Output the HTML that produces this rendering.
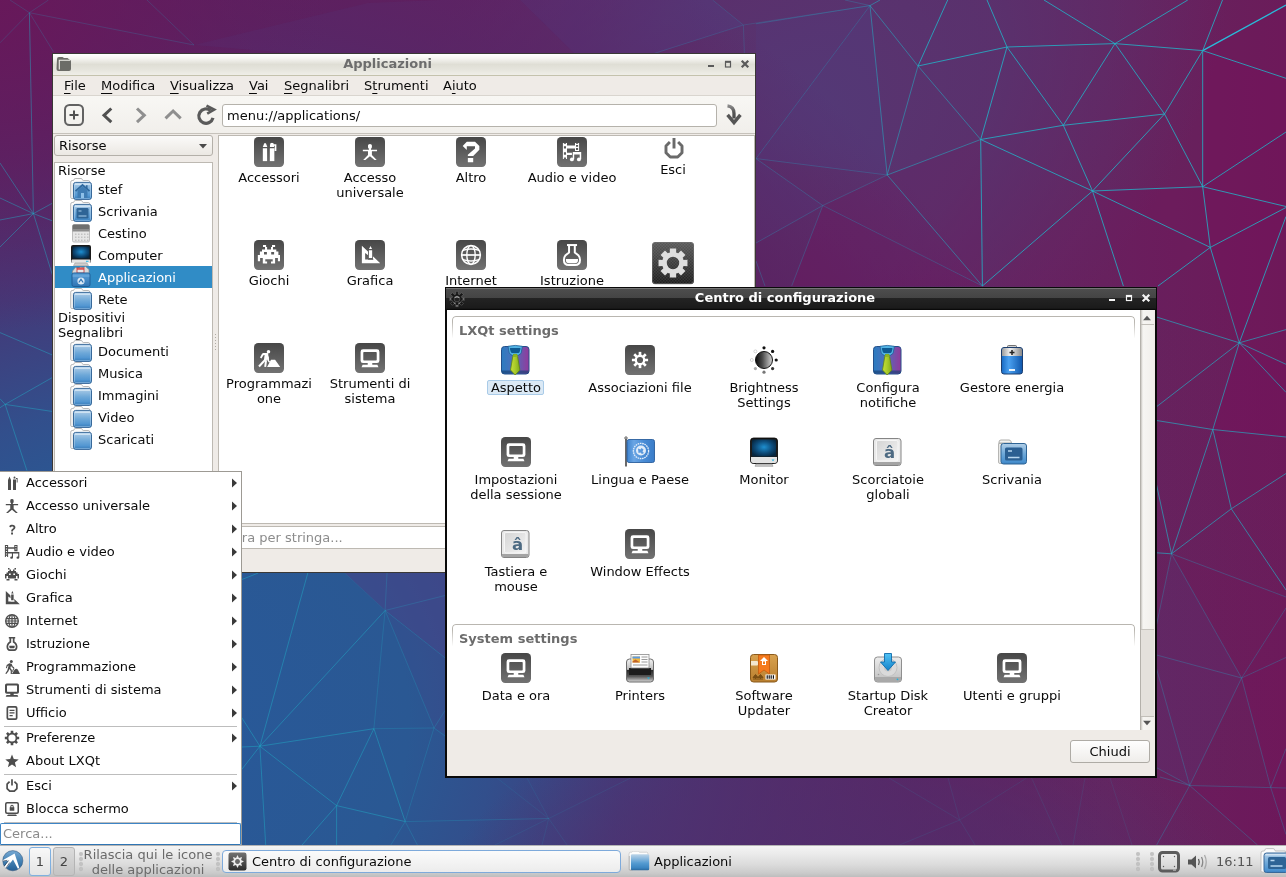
<!DOCTYPE html>
<html lang="it"><head><meta charset="utf-8"><title>LXQt Desktop</title>
<style>
html,body{margin:0;padding:0;}
body{width:1286px;height:877px;overflow:hidden;position:relative;font-family:"DejaVu Sans","Liberation Sans",sans-serif;font-size:13px;color:#0a0a0a;background:#5a2a6a;}
.abs{position:absolute;}

.t{position:absolute;white-space:nowrap;line-height:15px;}
.c{position:absolute;text-align:center;line-height:15px;}
u{text-decoration:underline;text-underline-offset:2.500px;text-decoration-thickness:1px;}

#fm,#cc,#menu,#panel{will-change:transform;transform:translateZ(0);}

</style></head><body>
<svg width="0" height="0" style="position:absolute">
<defs>
<linearGradient id="gbox" x1="0" y1="0" x2="0" y2="1"><stop offset="0" stop-color="#474747"/><stop offset="1" stop-color="#727272"/></linearGradient>
<symbol id="g-acc" viewBox="0 0 16 16"><path d="M4 15V5l1.500-3.500L7 5v10zM9 15V4.500h3V15zM9.600 3.600V2.200q0-.7.900-.7t.9.700v1.400zM12 3h1.600v4.500h-.9V3.900H12z"/></symbol>
<symbol id="g-acc2" viewBox="0 0 16 16"><path d="M2.800 15.700V4.800h3.600v10.900zM2.800 3.800l1.200-3.100h1.400l1.200 3.100zM8.700 15.700V4.800h3.800v10.900zM8.800 3.800V2.300q0-2 1.700-2t1.700 2v1.500zM12 1.500h2.200v5.700h-1.400V2.800H12z"/></symbol>
<symbol id="g-univ" viewBox="0 0 16 16"><path d="M6.250 2.400q0-1.400 1.700-1.400t1.700 1.400v1.300q0 1.200-.8 1.400v1h5.250v1.200H9.650v3.400L13.800 15h-1.900L7.950 11.700 4 15H2.100l4.150-4.300V7.300H1.800V6.100h5.250v-1q-.8-.2-.8-1.400z"/></symbol>
<symbol id="g-q" viewBox="0 0 16 16"><path d="M5.200 5.200C6 4.300 7 3.800 8.300 3.800c1.900 0 3.100 1 3.100 2.500 0 1.200-.7 1.800-1.500 2.400-.7.500-1 .8-1 1.500v.3H7.200v-.5c0-1 .5-1.600 1.300-2.200.7-.5 1-.8 1-1.400 0-.6-.5-1-1.300-1-.7 0-1.400.3-2 1zM7.100 11.600h1.900v1.900H7.100z"/></symbol>
<symbol id="g-q2" viewBox="0 0 16 16"><path d="M1.500 3.200C3.300 1.300 5.500.3 8.200.3c3.900 0 6.400 2 6.400 4.900 0 2.300-1.300 3.500-3.100 4.700-1.200.8-1.700 1.300-1.700 2.300v.3H5.600v-.8c0-1.900.9-2.900 2.500-3.900 1.300-.8 2-1.400 2-2.400 0-1.100-.9-1.700-2.400-1.700-1.400 0-2.700.6-4 1.900zM5.400 13.300h4.400v2.500H5.400z"/></symbol>
<symbol id="g-q3" viewBox="0 0 32 32"><path d="M7.700 10L11.800 5.850H20L24.350 10V13.650L18.200 20H12.850V18.800L20 12.400V10.150H11.800V14.050zM12.850 22.050H18.200V26.150H12.850z" fill="currentColor"/></symbol>
<symbol id="g-av2" viewBox="0 0 32 32"><path fill-rule="evenodd" d="M6.9 6.9H11V23.1H6.9zM7.9 6.9H10V7.7H7.9zM7.9 10.2H10V12.6H7.9zM7.9 16.3H10V18.8H7.9zM7.9 21.6H10V23.1H7.9zM19 6.9H23.1V15.1H19zM20 6.9H22.1V7.7H20zM20 9.1H22.1V10.8H20zM20 12H22.1V13.9H20zM11 9.55H19V12.4H11zM11 16.7H15.9V19H11z" fill="currentColor"/><path d="M16.76 15.9H25.2V18.4H16.76zM16.76 18.4H18.2V23.3H16.76zM23.7 18.4H25.2V23.3H23.7z" fill="currentColor"/><circle cx="15.900" cy="23.400" r="1.950" fill="currentColor"/><circle cx="22.900" cy="23.400" r="1.950" fill="currentColor"/></symbol>
<symbol id="g-av" viewBox="0 0 16 16"><path fill-rule="evenodd" d="M.9 1h3.200v2.300h6.200V1h3.200v6.200h-3.200V4.800H4.100v3.300H15.300v5.500a1.400 1.200 0 1 1-1.100-1.150V9.600H9v4a1.400 1.200 0 1 1-1.100-1.150V9.600H4.100v3.500H.9zM1.900 1.9h1.200v1.200h-1.200zM1.900 4.4h1.200v1.200h-1.200zM1.900 6.9h1.200v1.200h-1.200zM1.900 9.4h1.200v1.200h-1.200zM1.900 11.7h1.200v1.200h-1.200zM11.300 1.9h1.200v1.200h-1.200zM11.300 4.4h1.200v1.200h-1.200z"/></symbol>
<symbol id="g-game" viewBox="0 0 16 16"><path d="M4 1h1.500v1.500H7V4h2V2.500h1.500V1H12v1.500h-1.500V4H12v1.500h1.500V7H15v4.500h-1.500V9H12v3h1.500v1.500h-3V12H12v-.5H4v.5h1.500v1.500h-3V12H4V9H2.500v2.500H1V7h1.500V5.500H4V4h1.500V2.500H4zM5 6.500V8h1.700V6.500zM9.300 6.500V8H11V6.500z"/></symbol>
<symbol id="g-game2" viewBox="0 0 32 32"><path fill-rule="evenodd" d="M10 6H13.1V7.9H10zM12 7.9H14.1V10.4H12zM19 6H22.1V7.9H19zM18 7.9H20V10.4H18zM9 10.4H23.3V12.4H9zM6.9 12.4H25.4V16.1H6.9zM11 13.1H13.9V15.6H11zM18.2 13.1H21.1V15.6H18.2zM4.85 16.1H27V19H4.85zM4.85 19H7.1V22.3H4.85zM24.9 19H27V22.3H24.9zM9.8 19H22.1V22.4H9.8zM12.3 20.2H19.7V22.4H12.3zM9.8 22.4H14.1V24.6H9.8zM18 22.4H22.1V24.6H18z"/></symbol>
<symbol id="g-graf" viewBox="0 0 16 16"><mask id="mgraf"><rect width="16" height="16" fill="#fff"/><path d="M7.150 10.900V3.400l1.250-2.600 1.250 2.600v7.500z" fill="#000" stroke="#000" stroke-width="1.300"/></mask><path mask="url(#mgraf)" fill-rule="evenodd" d="M1.800 1V14.200H15.800zM4.300 6.500L10.900 11.500H4.300z"/><path d="M7.150 10.300V4.400h2.500v5.900zM7.250 3.500l1.150-2.400 1.150 2.400z"/></symbol>
<symbol id="g-net" viewBox="0 0 16 16"><path fill-rule="evenodd" d="M8 1a7 7 0 1 1 0 14A7 7 0 0 1 8 1zM7.400 2.500C6.600 3 6.100 3.900 5.800 5h1.600zM8.600 2.500V5h1.600C9.900 3.900 9.400 3 8.600 2.500zM5.500 3C4.600 3.400 3.800 4.100 3.300 5h1.300c.2-.8.500-1.400.9-2zM10.500 3c.4.600.7 1.200.9 2h1.300c-.5-.9-1.300-1.600-2.200-2zM2.800 6.200c-.2.400-.2.800-.3 1.200h1.800c0-.4.100-.8.100-1.200zM5.600 6.200c-.1.400-.1.800-.1 1.200h1.900V6.200zM8.600 6.200v1.200h1.900c0-.4 0-.8-.1-1.200zM11.600 6.200c0 .4.100.8.100 1.200h1.800c-.1-.4-.1-.8-.3-1.200zM2.500 8.600c.1.400.1.800.3 1.200h1.600c0-.4-.1-.8-.1-1.200zM5.500 8.600c0 .4 0 .8.100 1.200h1.800V8.600zM8.600 8.600v1.200h1.800c.1-.4.100-.8.100-1.200zM11.700 8.600c0 .4-.1.800-.1 1.200h1.600c.2-.4.200-.8.300-1.200zM3.300 11c.5.900 1.300 1.600 2.200 2-.4-.6-.7-1.200-.9-2zM5.800 11c.3 1.100.8 2 1.600 2.500V11zM8.600 11v2.500c.8-.5 1.300-1.400 1.600-2.500zM11.400 11c-.2.800-.5 1.400-.9 2 .9-.4 1.700-1.100 2.200-2z"/></symbol>
<symbol id="g-net2" viewBox="0 0 32 32"><g fill="none" stroke="currentColor"><circle cx="16" cy="16" r="9.400" stroke-width="1.500"/><ellipse cx="16" cy="16" rx="4.200" ry="9.400" stroke-width="1.400"/><path d="M6.600 16h18.800" stroke-width="1.700"/><path d="M8 11.300q8-2.600 16 0M8 20.700q8 2.600 16 0" stroke-width="1.400"/><path d="M10.800 8.300q5.200-1.300 10.400 0M10.800 23.700q5.200 1.300 10.400 0" stroke-width=".8" opacity=".45"/></g></symbol>
<symbol id="g-edu2" viewBox="0 0 32 32"><g fill="none" stroke="currentColor" stroke-width="2"><path d="M11 6.050h10.050"/><path d="M13.050 7V13.400L9.300 16.600Q7.900 18.200 7.900 21 7.900 26 12.900 26H19Q24 26 24 21 24 18.200 22.600 16.600L18.800 13.400V7" stroke-linejoin="round"/></g><path d="M9.900 19.900H22V21Q22 24.200 18.800 24.200H13.100Q9.900 24.200 9.900 21z" fill="currentColor"/></symbol>
<symbol id="g-edu" viewBox="0 0 16 16"><path fill-rule="evenodd" d="M4.800 1h6.400v1.600h-.7v2.900c1.900 1.200 3 3.200 3 5.300 0 2.400-1.300 4.200-3.200 4.200H5.700c-1.900 0-3.200-1.800-3.200-4.200 0-2.100 1.100-4.100 3-5.300V2.600h-.7zM7.200 2.600v3.800l-.8.500C4.900 7.800 4.200 9.200 4.200 10.800c0 1.500.7 2.500 1.600 2.500h4.400c.9 0 1.600-1 1.600-2.500 0-1.600-.7-3-2.200-3.900l-.8-.5V2.600zM5.300 9.700h5.400v1.400c0 .7-.3 1.100-.9 1.100H6.200c-.6 0-.9-.4-.9-1.100z"/></symbol>
<symbol id="g-dev" viewBox="0 0 16 16"><circle cx="7.300" cy="2.600" r="1.500"/><path d="M5.300 4.300l2.300.5 1.200 2.700 1.500.8-.5.900-2-1-.8-1.400-.6 2.300 1.500 2V15H6.700v-3.300L5.300 10l-.8 2.300L2.300 15l-1-.6 2-2.800.8-3.200.5-2-1 .6-.7 2.200-1-.3.800-2.900zM7.800 15l2.700-4.300c.5-.7 1-.9 1.700-.9s1.200.3 1.700 1L16 15zM9.500 8.800l1 .5-1.900 3.600-.6-.3z"/></symbol>
<symbol id="g-dev2" viewBox="0 0 32 32"><circle cx="15.500" cy="9.750" r="1.750" fill="currentColor"/><path d="M18 17.800h4.100l5.100 7.100H14.100zM10.200 10.900h4.600l.5 1.600.4 5.800-1.200.4-.4-1.400-.6 1.500-2.600-.6.700-5.300-1.200.3-1.900 3.200-1.500-.8 2-3.800z" fill="currentColor"/><g fill="none" stroke="currentColor" stroke-linecap="butt"><path d="M12.300 17.600L6 24.500" stroke-width="2.100"/><path d="M13 18.300L12.200 24.800" stroke-width="2"/><path d="M15.100 14.500L15.500 18.900 16.700 20.200" stroke-width="1.300"/></g></symbol>
<symbol id="g-sys" viewBox="0 0 16 16"><path fill-rule="evenodd" d="M2.800 1.500h10.400a1.800 1.800 0 0 1 1.800 1.800v6.700a1.800 1.800 0 0 1-1.800 1.800H2.800a1.800 1.800 0 0 1-1.800-1.800V3.300a1.800 1.800 0 0 1 1.800-1.800zM3.500 3.500a.5.500 0 0 0-.5.500v5.300a.5.500 0 0 0 .5.500h9a.5.500 0 0 0 .5-.5V4a.5.500 0 0 0-.5-.5zM6.300 11.800h3.400v1.300h-3.400zM2.500 13.100h11l.8 1.700H1.700z"/></symbol>
<symbol id="g-off" viewBox="0 0 16 16"><path fill-rule="evenodd" d="M4.500 1h7a2 2 0 0 1 2 2v10a2 2 0 0 1-2 2h-7a2 2 0 0 1-2-2V3a2 2 0 0 1 2-2zM4.800 2.700a.6.600 0 0 0-.6.600v9.400a.6.600 0 0 0 .6.600h6.400a.6.600 0 0 0 .6-.6V3.300a.6.600 0 0 0-.6-.6zM5.500 4.700h5v1.300h-5zM5.500 7.300h5v1.300h-5zM5.500 9.900h3.200v1.300H5.500z"/></symbol>
<symbol id="g-pref" viewBox="0 0 16 16"><path fill-rule="evenodd" d="M6.72 2.75L6.69 0.82L9.31 0.82L9.28 2.75A5.4 5.4 0 0 1 10.80 3.38L12.15 2.00L14.00 3.85L12.62 5.20A5.4 5.4 0 0 1 13.25 6.72L15.18 6.69L15.18 9.31L13.25 9.28A5.4 5.4 0 0 1 12.62 10.80L14.00 12.15L12.15 14.00L10.80 12.62A5.4 5.4 0 0 1 9.28 13.25L9.31 15.18L6.69 15.18L6.72 13.25A5.4 5.4 0 0 1 5.20 12.62L3.85 14.00L2.00 12.15L3.38 10.80A5.4 5.4 0 0 1 2.75 9.28L0.82 9.31L0.82 6.69L2.75 6.72A5.4 5.4 0 0 1 3.38 5.20L2.00 3.85L3.85 2.00L5.20 3.38ZM11.60 8A3.6 3.6 0 1 0 4.40 8A3.6 3.6 0 1 0 11.60 8Z"/></symbol>
<symbol id="g-pref2" viewBox="0 0 16 16"><path fill-rule="evenodd" d="M6.44 2.73L6.41 0.77L9.59 0.77L9.56 2.73A5.5 5.5 0 0 1 10.62 3.17L11.99 1.77L14.23 4.01L12.83 5.38A5.5 5.5 0 0 1 13.27 6.44L15.23 6.41L15.23 9.59L13.27 9.56A5.5 5.5 0 0 1 12.83 10.62L14.23 11.99L11.99 14.23L10.62 12.83A5.5 5.5 0 0 1 9.56 13.27L9.59 15.23L6.41 15.23L6.44 13.27A5.5 5.5 0 0 1 5.38 12.83L4.01 14.23L1.77 11.99L3.17 10.62A5.5 5.5 0 0 1 2.73 9.56L0.77 9.59L0.77 6.41L2.73 6.44A5.5 5.5 0 0 1 3.17 5.38L1.77 4.01L4.01 1.77L5.38 3.17ZM11.10 8A3.1 3.1 0 1 0 4.90 8A3.1 3.1 0 1 0 11.10 8Z"/></symbol>
<symbol id="g-sun" viewBox="0 0 16 16"><path fill-rule="evenodd" d="M8.00 0.60L9.68 3.93L13.23 2.77L12.07 6.32L15.40 8.00L12.07 9.68L13.23 13.23L9.68 12.07L8.00 15.40L6.32 12.07L2.77 13.23L3.93 9.68L0.60 8.00L3.93 6.32L2.77 2.77L6.32 3.93ZM10.50 8A2.5 2.5 0 1 0 5.50 8A2.5 2.5 0 1 0 10.50 8Z"/></symbol>
<symbol id="g-pref3" viewBox="0 0 16 16"><path fill-rule="evenodd" d="M6.74 3.16L6.75 0.30L9.25 0.30L9.26 3.16A5.0 5.0 0 0 1 10.53 3.69L12.56 1.67L14.33 3.44L12.31 5.47A5.0 5.0 0 0 1 12.84 6.74L15.70 6.75L15.70 9.25L12.84 9.26A5.0 5.0 0 0 1 12.31 10.53L14.33 12.56L12.56 14.33L10.53 12.31A5.0 5.0 0 0 1 9.26 12.84L9.25 15.70L6.75 15.70L6.74 12.84A5.0 5.0 0 0 1 5.47 12.31L3.44 14.33L1.67 12.56L3.69 10.53A5.0 5.0 0 0 1 3.16 9.26L0.30 9.25L0.30 6.75L3.16 6.74A5.0 5.0 0 0 1 3.69 5.47L1.67 3.44L3.44 1.67L5.47 3.69ZM10.90 8A2.9 2.9 0 1 0 5.10 8A2.9 2.9 0 1 0 10.90 8Z"/></symbol>
<symbol id="g-star" viewBox="0 0 16 16"><path d="M8 1.500l1.800 4.600 4.900.3-3.800 3.100 1.200 4.800L8 11.600l-4.100 2.700 1.200-4.800-3.800-3.100 4.900-.3z"/></symbol>
<symbol id="g-power" viewBox="0 0 16 16"><path d="M5.600 3.700L3.100 6.200V10.600L5.700 13.200H10.300L12.900 10.600V6.200L10.400 3.700M8 1.200V7.600" fill="none" stroke="currentColor" stroke-width="1.700" stroke-linejoin="round"/></symbol>
<symbol id="g-power2" viewBox="0 0 24 24"><path d="M8.200 5.600L4.600 9.200V15.400L8.600 19.400H15.400L19.400 15.400V9.200L15.800 5.600M12 1.800V11.600" fill="none" stroke="currentColor" stroke-width="2.700" stroke-linejoin="round"/></symbol>
<symbol id="g-lock" viewBox="0 0 16 16"><path fill-rule="evenodd" d="M3 1h10a2 2 0 0 1 2 2v8a2 2 0 0 1-2 2H3a2 2 0 0 1-2-2V3a2 2 0 0 1 2-2zM3.300 2.500a.8.800 0 0 0-.8.800v7.400a.8.800 0 0 0 .8.800h9.400a.8.800 0 0 0 .8-.8V3.300a.8.800 0 0 0-.8-.8zM6.300 6.200V5.500a1.700 1.700 0 0 1 3.400 0v.7h.6v3.600H5.700V6.200zM7.300 6.200h1.400V5.500a.7.700 0 0 0-1.400 0zM4 13.500h8l1 1.500H3z"/></symbol>
<!-- category icon: 32px box with gradient and white glyph -->
<symbol id="folder" viewBox="0 0 22 22">
 <path d="M.7 4.200q0-1.700 1.500-1.700h1q.6 0 .9-1 .3-1 1.100-1h6q.8 0 1.100 1 .3 1 1 1h5q1.300 0 1.500 1.500v16.500h-18q-1.100 0-1.100-1.200z" fill="#fbfbfb" stroke="#a6a6a6" stroke-width=".8"/>
 <path d="M2 5.500v14M3 5.500v14" stroke="#dcdcdc" stroke-width=".5"/>
 <rect x="3.500" y="4.400" width="18" height="17" rx="2.200" fill="url(#gfold)" stroke="#38699a" stroke-width="1"/>
 <path d="M5 6.200h15" stroke="#eaf3fb" stroke-width="1" opacity=".9"/>
 <rect x="4.500" y="5.400" width="16" height="15" rx="1.300" fill="none" stroke="#c4ddf2" stroke-width=".7" opacity=".6"/>
 <path d="M4.500 19.300h16" stroke="#3f7fb8" stroke-width="1.200" opacity=".6"/>
</symbol>
<linearGradient id="gfold" x1="0" y1="0" x2="0" y2="1"><stop offset="0" stop-color="#b2cfe8"/><stop offset=".5" stop-color="#6ea8d8"/><stop offset=".9" stop-color="#4890cf"/><stop offset="1" stop-color="#3b7fbd"/></linearGradient>
<linearGradient id="gfoldsel" x1="0" y1="0" x2="0" y2="1"><stop offset="0" stop-color="#5aa0d8"/><stop offset="1" stop-color="#2f75b4"/></linearGradient>
<radialGradient id="gscreen" cx=".5" cy=".45" r=".6"><stop offset="0" stop-color="#1e8fd0"/><stop offset=".6" stop-color="#0d4a78"/><stop offset="1" stop-color="#06263f"/></radialGradient>
<linearGradient id="gkey" x1="0" y1="0" x2="0" y2="1"><stop offset="0" stop-color="#fafafa"/><stop offset="1" stop-color="#d0d0d0"/></linearGradient>
<linearGradient id="gdark2" x1="0" y1="0" x2="0" y2="1"><stop offset="0" stop-color="#727272"/><stop offset="1" stop-color="#2c2c2c"/></linearGradient>
<linearGradient id="gdark" x1="0" y1="0" x2="0" y2="1"><stop offset="0" stop-color="#5a5a5a"/><stop offset="1" stop-color="#1d1d1d"/></linearGradient>
</defs>
</svg>
<svg id="wall" class="abs" style="left:0;top:0" width="1286" height="877" viewBox="0 0 1286 877"><defs><linearGradient id="wbase" gradientUnits="userSpaceOnUse" x1="0" y1="0" x2="1286" y2="0"><stop offset="0" stop-color="#611c5e"/><stop offset=".55" stop-color="#63205f"/><stop offset=".86" stop-color="#65245f"/><stop offset="1" stop-color="#6b1c5a"/></linearGradient><radialGradient id="wridge" gradientUnits="userSpaceOnUse" cx="0" cy="0" r="1" gradientTransform="translate(780,140) rotate(-40) scale(520,330)"><stop offset="0" stop-color="#553873" stop-opacity=".95"/><stop offset=".5" stop-color="#573571" stop-opacity=".75"/><stop offset="1" stop-color="#5c3070" stop-opacity="0"/></radialGradient><radialGradient id="wblue" gradientUnits="userSpaceOnUse" cx="0" cy="0" r="880" gradientTransform="translate(150,720) scale(1.09,1)"><stop offset="0" stop-color="#28599a"/><stop offset=".27" stop-color="#2a5893"/><stop offset=".36" stop-color="#324f8c"/><stop offset=".5" stop-color="#443978"/><stop offset=".66" stop-color="#522a69"/><stop offset=".8" stop-color="#5a2261" stop-opacity=".9"/><stop offset="1" stop-color="#5e1e5e" stop-opacity="0"/></radialGradient><radialGradient id="wtl" gradientUnits="userSpaceOnUse" cx="0" cy="0" r="330"><stop offset="0" stop-color="#68185a" stop-opacity=".95"/><stop offset=".5" stop-color="#641a5c" stop-opacity=".6"/><stop offset="1" stop-color="#601c5e" stop-opacity="0"/></radialGradient><linearGradient id="wbr" gradientUnits="userSpaceOnUse" x1="1286" y1="300" x2="1100" y2="877"><stop offset="0" stop-color="#5a2868" stop-opacity="0"/><stop offset="1" stop-color="#5a2868" stop-opacity=".12"/></linearGradient><radialGradient id="wbot" gradientUnits="userSpaceOnUse" cx="0" cy="0" r="1" gradientTransform="translate(840,905) scale(400,210)"><stop offset="0" stop-color="#4e306f" stop-opacity=".8"/><stop offset=".6" stop-color="#51306e" stop-opacity=".5"/><stop offset="1" stop-color="#55306c" stop-opacity="0"/></radialGradient></defs><rect width="1286" height="877" fill="url(#wbase)"/><rect width="1286" height="877" fill="url(#wridge)"/><rect width="1286" height="877" fill="url(#wbr)"/><rect width="1286" height="877" fill="url(#wblue)"/><rect width="500" height="400" fill="url(#wtl)"/><rect y="650" width="1286" height="227" fill="url(#wbot)"/><polygon points="756,158.6 870,5.6 887.2,175" fill="#4a4a90" fill-opacity="0.18"/><polygon points="870,5.6 756,23.8 756,158.6" fill="#4a4a90" fill-opacity="0.12"/><polygon points="822.8,205.5 887.2,175 982.4,286" fill="#78105a" fill-opacity="0.22"/><polygon points="887.2,175 980.7,139.5 982.4,286" fill="#78105a" fill-opacity="0.16"/><polygon points="822.8,205.5 982.4,286 791.7,286" fill="#78105a" fill-opacity="0.28"/><polygon points="756,158.6 822.8,205.5 756,243" fill="#4a4a90" fill-opacity="0.12"/><polygon points="1202.7,50.6 1286,78.3 1286,132 1202.7,186.7" fill="#78105a" fill-opacity="0.45"/><polygon points="1202.7,186.7 1286,132 1286,206.5" fill="#78105a" fill-opacity="0.4"/><polygon points="1202.7,50.6 1286,5 1286,78.3" fill="#78105a" fill-opacity="0.2"/><polygon points="1092.5,191 1202.7,186.7 1210.3,247.4" fill="#78105a" fill-opacity="0.3"/><polygon points="1202.7,186.7 1286,206.5 1210.3,247.4" fill="#78105a" fill-opacity="0.45"/><polygon points="1210.3,247.4 1286,207.5 1286,216.5 1239.3,342.8" fill="#78105a" fill-opacity="0.45"/><polygon points="1286,216.5 1286,329.6 1239.3,342.8" fill="#78105a" fill-opacity="0.3"/><polygon points="1210.3,247.4 1239.3,342.8 1156.6,317 1157,288 1158,286" fill="#78105a" fill-opacity="0.15"/><polygon points="1092.5,191 1210.3,247.4 1158,286 1123.4,286" fill="#78105a" fill-opacity="0.25"/><polygon points="982.4,286 1092.5,191 1123.4,286" fill="#78105a" fill-opacity="0.12"/><polygon points="1239.3,342.8 1286,364.3 1286,437 1212.8,429.5" fill="#78105a" fill-opacity="0.45"/><polygon points="1239.3,342.8 1286,329.6 1286,364.3" fill="#78105a" fill-opacity="0.3"/><polygon points="1212.8,429.5 1286,437 1286,473.5 1231.3,508.8" fill="#78105a" fill-opacity="0.2"/><polygon points="1171.5,553.8 1241.6,678 1189.7,785.5 1156.6,767.7 1156.6,624.5" fill="#553a7c" fill-opacity="0.2"/><polygon points="1241.6,678 1286,657.5 1286,748.5 1270.7,787.5" fill="#78105a" fill-opacity="0.35"/><polygon points="1241.6,678 1286,608 1286,657.5" fill="#78105a" fill-opacity="0.22"/><polygon points="1270.7,787.5 1286,748.5 1286,834.5" fill="#78105a" fill-opacity="0.4"/><polygon points="1189.7,785.5 1270.7,787.5 1286,834.5 1286,845 1257.5,845" fill="#78105a" fill-opacity="0.28"/><polygon points="1171.5,553.8 1286,597 1286,608 1241.6,678" fill="#78105a" fill-opacity="0.12"/><polygon points="520,0 575,54 654,54 743.4,25 712.6,0" fill="#4a4a90" fill-opacity="0.22"/><polygon points="368,3 440,0 520,0 575,54 300,54 194,45" fill="#4a4a90" fill-opacity="0.1"/><polygon points="344.6,573 456,573 456,666 385.1,610.5" fill="#4a3f85" fill-opacity="0.5"/><polygon points="385.1,610.5 456,666 456,740 434,728" fill="#4a3f85" fill-opacity="0.22"/><path d="M1202.7 50.6L1286 5" stroke="#25c4e0" stroke-opacity="0.95" stroke-width="1.3" fill="none"/><path d="M1115 43.6L1044 0 M1115 43.6L1187.8 0 M1115 43.6L1007 47 M1115 43.6L1202.7 50.6 M1115 43.6L1063.3 125.3 M1115 43.6L1164.5 114 M1202.7 50.6L1222.5 0 M1202.7 50.6L1286 78.3 M1202.7 50.6L1164.5 114 M1202.7 50.6L1202.7 186.7 M1063.3 125.3L1007 47 M1063.3 125.3L980.7 139.5 M1063.3 125.3L1164.5 114 M1063.3 125.3L1092.5 191 M1164.5 114L1092.5 191 M1164.5 114L1202.7 186.7 M1092.5 191L980.7 139.5 M1092.5 191L982.4 286 M1092.5 191L1202.7 186.7 M1092.5 191L1210.3 247.4 M1092.5 191L1123.4 286 M1202.7 186.7L1210.3 247.4 M1202.7 186.7L1286 132 M1202.7 186.7L1286 206.5 M1210.3 247.4L1286 207.5 M1210.3 247.4L1158 286 M1210.3 247.4L1220.1 280 M1286 216.5L1239.3 342.8 M1007 47L987 0 M1007 47L980.7 139.5 M918 66L1007 47 M918 66L947.7 0 M980.7 139.5L982.4 286" stroke="#20b8cc" stroke-opacity="0.78" stroke-width="1" fill="none"/><path d="M870 5.6L918 66 M870 5.6L887.2 175 M918 66L980.7 139.5 M918 66L887.2 175 M980.7 139.5L887.2 175 M887.2 175L982.4 286 M870 5.6L880 0" stroke="#20b8cc" stroke-opacity="0.5" stroke-width="1" fill="none"/><path d="M870 5.6L756 23.8 M870 5.6L845 0 M870 5.6L756 158.6 M887.2 175L756 158.6 M887.2 175L822.8 205.5 M822.8 205.5L756 158.6 M822.8 205.5L756 243 M822.8 205.5L791.7 286 M822.8 205.5L982.4 286 M756 261L765 286" stroke="#2a9fc0" stroke-opacity="0.3" stroke-width="1" fill="none"/><path d="M1239.3 342.8L1220.1 280 M1239.3 342.8L1156.6 317 M1239.3 342.8L1286 329.6 M1239.3 342.8L1286 364.3 M1239.3 342.8L1286 392.4 M1239.3 342.8L1156.6 406.7 M1239.3 342.8L1212.8 429.5 M1212.8 429.5L1156.6 420.5 M1212.8 429.5L1286 437 M1212.8 429.5L1231.3 508.8 M1212.8 429.5L1171.5 553.8 M1231.3 508.8L1286 473.5 M1231.3 508.8L1171.5 553.8 M1231.3 508.8L1286 590 M1171.5 553.8L1156.6 485 M1171.5 553.8L1156.6 552.8" stroke="#20b8cc" stroke-opacity="0.62" stroke-width="1" fill="none"/><path d="M1171.5 553.8L1241.6 678 M1171.5 553.8L1156.6 624.5 M1171.5 553.8L1286 597 M1241.6 678L1286 608 M1241.6 678L1286 657.5 M1241.6 678L1156.6 655 M1241.6 678L1189.7 785.5 M1241.6 678L1270.7 787.5 M1189.7 785.5L1156.6 669 M1189.7 785.5L1156.6 767.7 M1189.7 785.5L1286 788 M1189.7 785.5L1156.6 845 M1189.7 785.5L1257.5 845 M1270.7 787.5L1286 748.5 M1270.7 787.5L1286 834.5 M1189.7 785.5L1160 777" stroke="#2a9fc0" stroke-opacity="0.33" stroke-width="1" fill="none"/><path d="M259.9 746.2L241.7 717.5 M259.9 746.2L241.7 747 M259.9 746.2L241.7 769.5 M259.9 746.2L307.8 573 M259.9 746.2L385.1 610.5 M259.9 746.2L373.9 728.7 M259.9 746.2L336.6 805.6 M259.9 746.2L265.7 845 M241.7 579.6L258.3 573 M373.9 728.7L336.6 805.6 M336.6 805.6L302 845 M336.6 805.6L336.6 845 M336.6 805.6L405.2 821.6 M373.9 728.7L405.2 821.6" stroke="#20b8cc" stroke-opacity="0.42" stroke-width="1" fill="none"/><path d="M385.1 610.5L387 573 M385.1 610.5L445 595.5 M385.1 610.5L445 657.8 M385.1 610.5L373.9 728.7 M385.1 610.5L434 728 M373.9 728.7L434 728 M434 728L405.2 821.6 M434 728L445 710.5 M434 728L445 736 M405.2 821.6L390.8 845 M405.2 821.6L417.4 845 M405.2 821.6L548.7 818.5" stroke="#20b8cc" stroke-opacity="0.22" stroke-width="1" fill="none"/><path d="M33.4 213.6L0 163 M33.4 213.6L0 198 M33.4 213.6L0 220 M33.4 213.6L0 247 M33.4 213.6L52.7 203 M33.4 213.6L52.7 221 M33.4 213.6L52.6 275.6 M33.4 213.6L29.4 12.7 M5.1 404.4L0 398.7 M5.1 404.4L0 407.7 M5.1 404.4L52.6 377.4 M5.1 404.4L52.6 411.5 M5.1 404.4L26.9 470.5 M0 332.6L52.6 355.1" stroke="#20b8cc" stroke-opacity="0.42" stroke-width="1" fill="none"/><path d="M29.4 12.7L10 0 M29.4 12.7L48.5 0 M29.4 12.7L0 42.8 M29.4 12.7L53.5 51.8 M29.4 12.7L194 45 M194 45L147 0 M743.4 25L712.6 0 M743.4 25L870 5.6 M743.4 25L654 53.5 M743.4 25L744.4 53.5" stroke="#2a9fc0" stroke-opacity="0.22" stroke-width="1" fill="none"/><path d="M548.7 818.5L497 778 M548.7 818.5L527 778 M548.7 818.5L630.6 778 M548.7 818.5L495 845 M548.7 818.5L542 845 M548.7 818.5L567 845 M385.1 610.5L344.6 573 M959.7 820L889 778 M959.7 820L948 778 M959.7 820L1026.6 778 M959.7 820L899.5 845 M959.7 820L975 845 M1031.6 778L1061.7 845 M1085 778L1073 845 M1110 778L1132 845" stroke="#20b8cc" stroke-opacity="0.1" stroke-width="1" fill="none"/></svg><div id="fm" class="abs" style="left:53px;top:53px;width:702px;height:520px;background:#efebe7;"><div class="abs" style="left:-1px;top:0;width:702px;height:518px;border:1px solid #3a3836;"></div><div class="abs" style="left:0;top:1px;width:702px;height:21px;background:linear-gradient(#ffffff 0,#f6f5f2 20%,#dfded5 50%,#e6e5dd 75%,#efeee8 100%);border-bottom:1px solid #c4c2ad;"></div><svg class="abs" style="left:3px;top:3px" width="18" height="17" viewBox="0 0 18 17"><path d="M1 3q0-2 2-2h3.500l1.500 1h3.500l2.500 2q1 .3 1 1.500v7.500q0 2-2 2h-10.500q-2 0-2-2z" fill="#6c6c67"/><path d="M3.300 13.600V4.300H14" fill="none" stroke="#f1f0ea" stroke-width="1.100"/></svg><div class="t" style="left:0;width:669px;top:3px;text-align:center;font-weight:bold;color:#6d6d6d;">Applicazioni</div><svg class="abs" style="left:650px;top:4px" width="50" height="16" viewBox="0 0 50 16" fill="none" stroke="#5a5a5a"><path d="M5 9h6" stroke-width="2"/><rect x="22.500" y="5" width="5" height="5" stroke-width="1.200"/><path d="M22 4.700h6" stroke-width="1.800"/><path d="M39.500 4.500l5 5M44.500 4.500l-5 5" stroke-width="2.200" stroke-linecap="square"/></svg><div class="t" style="left:11px;top:25px;"><u>F</u>ile</div><div class="t" style="left:48px;top:25px;"><u>M</u>odifica</div><div class="t" style="left:117px;top:25px;"><u>V</u>isualizza</div><div class="t" style="left:196px;top:25px;"><u>V</u>ai</div><div class="t" style="left:231px;top:25px;"><u>S</u>egnalibri</div><div class="t" style="left:311px;top:25px;">S<u>t</u>rumenti</div><div class="t" style="left:390px;top:25px;">A<u>i</u>uto</div><div class="abs" style="left:0;top:42px;width:702px;height:1px;background:#d9d5cf;"></div><div class="abs" style="left:0;top:43px;width:702px;height:37px;background:linear-gradient(#f8f7f4,#f1efeb);border-bottom:1px solid #c6c2bb;"></div><svg class="abs" style="left:8px;top:48px" width="160" height="28" viewBox="0 0 160 28" fill="none" stroke-linejoin="miter"><rect x="4" y="4" width="18" height="20" rx="4.500" stroke="#626262" stroke-width="2"/><path d="M13 9.500v9M8.500 14h9" stroke="#505050" stroke-width="2"/><path d="M50.300 7.500l-7.300 6.800 7.300 6.800" stroke="#505050" stroke-width="3"/><path d="M76 7.500l7.300 6.800-7.300 6.800" stroke="#8f8f8f" stroke-width="3"/><path d="M104.500 17.300l7.600-7.300 7.600 7.300" stroke="#8f8f8f" stroke-width="3"/><path d="M149.600 9.500A7.200 7.200 0 1 0 152 16.900" stroke="#5a5a5a" stroke-width="3.200"/><path d="M145.500 4.700l7.700 3.800-7 4.200" stroke="#5a5a5a" stroke-width="2.600"/></svg><div class="abs" style="left:169px;top:51px;width:493px;height:21px;background:#fff;border:1px solid #b5b2ab;border-radius:3px;"></div><div class="t" style="left:174px;top:55px;">menu://applications/</div><svg class="abs" style="left:670px;top:49px" width="24" height="26" viewBox="0 0 24 26" fill="none"><defs><linearGradient id="ggo" x1="0" y1="0" x2="0" y2="1"><stop offset="0" stop-color="#8a8a8a"/><stop offset=".5" stop-color="#555"/><stop offset="1" stop-color="#4a4a4a"/></linearGradient></defs><path d="M4.500 3.800q6.500.7 6.500 7.700v5" stroke="url(#ggo)" stroke-width="3.300"/><path d="M4.600 12.800l6.400 7.800 6.400-7.800" stroke="#555" stroke-width="3.400" stroke-linejoin="miter"/></svg><div class="abs" style="left:1px;top:82px;width:157px;height:19px;border:1px solid #b4b0a9;border-radius:3px;background:linear-gradient(#fbfaf9,#ebe8e3);"></div><div class="t" style="left:6px;top:85px;">Risorse</div><svg class="abs" style="left:145px;top:90px" width="10" height="6"><path d="M1 1h8L5 5.500z" fill="#4a4a4a"/></svg><div class="abs" style="left:1px;top:109px;width:157px;height:420px;background:#fff;border:1px solid #bdb9b2;"></div><div class="t" style="left:5px;top:110px;">Risorse</div><svg class="abs" style="left:17px;top:125px" width="22" height="22" viewBox="0 0 22 22"><use href="#folder" width="22" height="22"/><path d="M5.500 13.200L12.500 7l7 6.200" fill="none" stroke="#2f689d" stroke-width="1.700"/><path d="M7.500 12.500l5-4.300 5 4.300v7.500h-10z" fill="#3f7cb3"/><rect x="11" y="15" width="3" height="5" fill="#8ec0e8"/><path d="M16.800 7.200v3.500" stroke="#2f689d" stroke-width="1.500"/></svg><div class="t" style="left:45px;top:129px;">stef</div><svg class="abs" style="left:17px;top:147px" width="22" height="22" viewBox="0 0 22 22"><use href="#folder" width="22" height="22"/><rect x="6.500" y="8" width="12" height="10.500" rx="1.200" fill="#2e6496"/><path d="M8.500 11h3M8.500 16h8" stroke="#a8cdec" stroke-width="1.100"/></svg><div class="t" style="left:45px;top:151px;">Scrivania</div><svg class="abs" style="left:17px;top:169px" width="22" height="22" viewBox="0 0 22 22"><rect x="2.500" y="2.500" width="17" height="17.500" rx="1.500" fill="#e6e6e6" stroke="#bdbdbd"/><rect x="2.500" y="2.500" width="17" height="6" rx="1.500" fill="#6f6f6f"/><rect x="2.500" y="7" width="17" height="2.500" fill="#8d8d8d"/><g fill="#c2c2c2"><rect x="5" y="11.5" width="1.500" height="1.500"/><rect x="5" y="14.5" width="1.500" height="1.500"/><rect x="5" y="17.5" width="1.500" height="1.500"/><rect x="8" y="11.5" width="1.500" height="1.500"/><rect x="8" y="14.5" width="1.500" height="1.500"/><rect x="8" y="17.5" width="1.500" height="1.500"/><rect x="11" y="11.5" width="1.500" height="1.500"/><rect x="11" y="14.5" width="1.500" height="1.500"/><rect x="11" y="17.5" width="1.500" height="1.500"/><rect x="14" y="11.5" width="1.500" height="1.500"/><rect x="14" y="14.5" width="1.500" height="1.500"/><rect x="14" y="17.5" width="1.500" height="1.500"/><rect x="17" y="11.5" width="1.500" height="1.500"/><rect x="17" y="14.5" width="1.500" height="1.500"/><rect x="17" y="17.5" width="1.500" height="1.500"/></g></svg><div class="t" style="left:45px;top:173px;">Cestino</div><svg class="abs" style="left:17px;top:191px" width="22" height="22" viewBox="0 0 22 22"><rect x="1" y="1" width="20" height="18" rx="2" fill="#1a1a1a"/><rect x="2.500" y="2.500" width="17" height="12" rx="1" fill="url(#gscreen)"/><rect x="1.500" y="15.500" width="19" height="3.500" rx="1" fill="#e4e4e4"/><rect x="16" y="16.800" width="2.500" height="1" fill="#21b7e6"/><path d="M5 19h12l1.500 2.500h-15z" fill="#cfcfcf" stroke="#9a9a9a" stroke-width=".6"/></svg><div class="t" style="left:45px;top:195px;">Computer</div><div class="abs" style="left:2px;top:213px;width:157px;height:22px;background:#308cc6;"></div><svg class="abs" style="left:17px;top:213px" width="22" height="22" viewBox="0 0 22 22"><path d="M2.500 5l3-3.500 3 1 2-1.500 3 .5 2 -1 3.500 3v4h-16.500z" fill="#d9d9d9" stroke="#8a8a8a" stroke-width=".7"/><rect x="7" y="2" width="7" height="5" fill="#e8e8e8" stroke="#c33" stroke-width=".8"/><path d="M7 3h7" stroke="#d33" stroke-width="1.300"/><rect x="2" y="7" width="18" height="13.500" rx="1.800" fill="url(#gfoldsel)" stroke="#1f5f98"/><path d="M2.500 10h17" stroke="#9cc8ee" stroke-width=".7" opacity=".7"/><circle cx="11" cy="15" r="3.600" fill="#dbe9f5"/><path d="M8.800 16.500l2.200-3.200 2.200 3.200" fill="none" stroke="#2f75b4" stroke-width="1.200"/></svg><div class="t" style="left:45px;top:217px;color:#fff;">Applicazioni</div><svg class="abs" style="left:17px;top:235px" width="22" height="22" viewBox="0 0 22 22"><use href="#folder" width="22" height="22"/></svg><div class="t" style="left:45px;top:239px;">Rete</div><div class="t" style="left:5px;top:257px;">Dispositivi</div><div class="t" style="left:5px;top:272px;">Segnalibri</div><svg class="abs" style="left:17px;top:287px" width="22" height="22" viewBox="0 0 22 22"><use href="#folder" width="22" height="22"/></svg><div class="t" style="left:45px;top:291px;">Documenti</div><svg class="abs" style="left:17px;top:309px" width="22" height="22" viewBox="0 0 22 22"><use href="#folder" width="22" height="22"/></svg><div class="t" style="left:45px;top:313px;">Musica</div><svg class="abs" style="left:17px;top:331px" width="22" height="22" viewBox="0 0 22 22"><use href="#folder" width="22" height="22"/></svg><div class="t" style="left:45px;top:335px;">Immagini</div><svg class="abs" style="left:17px;top:353px" width="22" height="22" viewBox="0 0 22 22"><use href="#folder" width="22" height="22"/></svg><div class="t" style="left:45px;top:357px;">Video</div><svg class="abs" style="left:17px;top:375px" width="22" height="22" viewBox="0 0 22 22"><use href="#folder" width="22" height="22"/></svg><div class="t" style="left:45px;top:379px;">Scaricati</div><div class="abs" style="left:162px;top:281px;width:1px;height:18px;background:repeating-linear-gradient(#b0aca5 0 1px,transparent 1px 3px);"></div><div class="abs" style="left:165px;top:82px;width:535px;height:387px;background:#fff;border:1px solid #bdb9b2;"></div><svg class="abs" style="left:200px;top:83px;color:#fff" width="32" height="32" viewBox="0 0 32 32"><rect x="1" y="1" width="30" height="30" rx="4.200" fill="url(#gbox)"/><use href="#g-acc2" x="6.5" y="6.5" width="19" height="19" fill="#fff"/></svg><div class="c" style="left:166px;width:100px;top:117px;">Accessori</div><svg class="abs" style="left:301px;top:83px;color:#fff" width="32" height="32" viewBox="0 0 32 32"><rect x="1" y="1" width="30" height="30" rx="4.200" fill="url(#gbox)"/><use href="#g-univ" x="6.75" y="6.75" width="18.5" height="18.5" fill="#fff"/></svg><div class="c" style="left:267px;width:100px;top:117px;">Accesso<br>universale</div><svg class="abs" style="left:402px;top:83px;color:#fff" width="32" height="32" viewBox="0 0 32 32"><rect x="1" y="1" width="30" height="30" rx="4.200" fill="url(#gbox)"/><use href="#g-q3" x="0.0" y="0.0" width="32" height="32" fill="#fff"/></svg><div class="c" style="left:368px;width:100px;top:117px;">Altro</div><svg class="abs" style="left:503px;top:83px;color:#fff" width="32" height="32" viewBox="0 0 32 32"><rect x="1" y="1" width="30" height="30" rx="4.200" fill="url(#gbox)"/><use href="#g-av2" x="0.0" y="0.0" width="32" height="32" fill="#fff"/></svg><div class="c" style="left:469px;width:100px;top:117px;">Audio e video</div><svg class="abs" style="left:200px;top:186px;color:#fff" width="32" height="32" viewBox="0 0 32 32"><rect x="1" y="1" width="30" height="30" rx="4.200" fill="url(#gbox)"/><use href="#g-game2" x="0.0" y="0.0" width="32" height="32" fill="#fff"/></svg><div class="c" style="left:166px;width:100px;top:220px;">Giochi</div><svg class="abs" style="left:301px;top:186px;color:#fff" width="32" height="32" viewBox="0 0 32 32"><rect x="1" y="1" width="30" height="30" rx="4.200" fill="url(#gbox)"/><use href="#g-graf" x="5.5" y="5.5" width="21" height="21" fill="#fff"/></svg><div class="c" style="left:267px;width:100px;top:220px;">Grafica</div><svg class="abs" style="left:402px;top:186px;color:#fff" width="32" height="32" viewBox="0 0 32 32"><rect x="1" y="1" width="30" height="30" rx="4.200" fill="url(#gbox)"/><use href="#g-net2" x="0.0" y="0.0" width="32" height="32" fill="#fff"/></svg><div class="c" style="left:368px;width:100px;top:220px;">Internet</div><svg class="abs" style="left:503px;top:186px;color:#fff" width="32" height="32" viewBox="0 0 32 32"><rect x="1" y="1" width="30" height="30" rx="4.200" fill="url(#gbox)"/><use href="#g-edu2" x="0.0" y="0.0" width="32" height="32" fill="#fff"/></svg><div class="c" style="left:469px;width:100px;top:220px;">Istruzione</div><svg class="abs" style="left:200px;top:289px;color:#fff" width="32" height="32" viewBox="0 0 32 32"><rect x="1" y="1" width="30" height="30" rx="4.200" fill="url(#gbox)"/><use href="#g-dev2" x="0.0" y="0.0" width="32" height="32" fill="#fff"/></svg><div class="c" style="left:166px;width:100px;top:323px;">Programmazi<br>one</div><svg class="abs" style="left:301px;top:289px;color:#fff" width="32" height="32" viewBox="0 0 32 32"><rect x="1" y="1" width="30" height="30" rx="4.200" fill="url(#gbox)"/><use href="#g-sys" x="5.25" y="5.25" width="21.5" height="21.5" fill="#fff"/></svg><div class="c" style="left:267px;width:100px;top:323px;">Strumenti di<br>sistema</div><svg class="abs" style="left:608px;top:83px;color:#6a6a6a" width="26" height="26"><use href="#g-power2" width="26" height="26" fill="#6a6a6a"/></svg><div class="c" style="left:570px;width:100px;top:109px;">Esci</div><svg class="abs" style="left:598px;top:188px" width="44" height="46" viewBox="0 0 44 46"><defs><pattern id="chk" width="3" height="3" patternUnits="userSpaceOnUse"><rect width="1.500" height="1.500" fill="#fff" opacity=".09"/><rect x="1.500" y="1.500" width="1.500" height="1.500" fill="#fff" opacity=".09"/></pattern></defs><rect x="1.500" y="2" width="41" height="41.500" rx="3" fill="#000" opacity=".25"/><rect x="1" y="1" width="42" height="42" rx="3.500" fill="url(#gdark)"/><rect x="1" y="1" width="42" height="42" rx="3.500" fill="url(#chk)"/><rect x="1.500" y="1.500" width="41" height="41" rx="3" fill="none" stroke="#777" stroke-opacity=".5"/><use href="#g-pref2" x="6" y="6" width="32" height="32" fill="#dedede"/></svg><div class="abs" style="left:165px;top:473px;width:536px;height:21px;background:#fff;border:1px solid #bdb9b2;"></div><div class="t" style="left:170px;top:477px;color:#8c8c8c;">Filtra per stringa...</div></div><div id="cc" class="abs" style="left:445px;top:288px;width:712px;height:489px;"><div class="abs" style="left:0;top:-1px;width:712px;height:491px;background:#0a0a0a;"></div><div class="abs" style="left:1px;top:0;width:710px;height:21px;background:linear-gradient(#747474 0,#747474 1px,#4d4d4d 1px,#444 10px,#232323 10px,#1b1b1b 20px,#111 21px);"></div><svg class="abs" style="left:4px;top:3px" width="16" height="16" viewBox="0 0 16 16"><use href="#g-pref3" width="16" height="16" fill="#161616" stroke="#777" stroke-width=".5"/><path d="M5.800 7A2.600 2.600 0 0 1 10.200 7" fill="none" stroke="#bdbdbd" stroke-width=".9"/><path d="M1 8h1.300M13.700 8H15M7.300 14.800h1.400M4.500 11.300q1 1.200 2 .8M11.500 11.300q-1 1.200-2 .8" stroke="#cfcfcf" stroke-width=".9" fill="none"/></svg><div class="t" style="left:0;width:680px;top:2px;text-align:center;font-weight:bold;color:#fff;">Centro di configurazione</div><svg class="abs" style="left:660px;top:3px" width="50" height="16" viewBox="0 0 50 16" fill="none" stroke="#f4f4f4"><path d="M4 9h6" stroke-width="2"/><rect x="21.500" y="4.500" width="5" height="5" stroke-width="1.200"/><path d="M21 5h6" stroke-width="2"/><path d="M38.500 4.500l5 5M43.500 4.500l-5 5" stroke-width="2.200" stroke-linecap="square"/></svg><div class="abs" style="left:2px;top:22px;width:708px;height:466px;background:#efebe7;"></div><div class="abs" style="left:2px;top:22px;width:693px;height:420px;background:#fff;"></div><div class="abs" style="left:695px;top:22px;width:14px;height:420px;background:linear-gradient(90deg,#c9c6c0 0,#f6f5f2 2px,#f1efeb 100%);border-left:1px solid #b4b1ab;box-sizing:border-box;"></div><div class="abs" style="left:696px;top:36px;width:13px;height:1px;background:#c2bfb9;"></div><svg class="abs" style="left:698px;top:27px" width="9" height="6"><path d="M4 .8l4 4.400h-8z" fill="#555"/></svg><div class="abs" style="left:696px;top:341px;width:13px;height:87px;background:#e4e1dc;border-top:1px solid #c8c5bf;"></div><div class="abs" style="left:696px;top:428px;width:13px;height:1px;background:#c2bfb9;"></div><svg class="abs" style="left:698px;top:432px" width="9" height="6"><path d="M4 5.200l4-4.400h-8z" fill="#555"/></svg><div class="abs" style="left:7px;top:28px;width:683px;height:30px;border:1px solid #b9b6b0;border-bottom:none;border-radius:4px 4px 0 0;box-sizing:border-box;-webkit-mask-image:linear-gradient(#000 20%,transparent 75%);mask-image:linear-gradient(#000 20%,transparent 75%);"></div><div class="t" style="left:14px;top:35px;font-weight:bold;color:#6c6c6c;">LXQt settings</div><div class="abs" style="left:7px;top:336px;width:683px;height:30px;border:1px solid #b9b6b0;border-bottom:none;border-radius:4px 4px 0 0;box-sizing:border-box;-webkit-mask-image:linear-gradient(#000 20%,transparent 75%);mask-image:linear-gradient(#000 20%,transparent 75%);"></div><div class="t" style="left:14px;top:343px;font-weight:bold;color:#6c6c6c;">System settings</div><svg class="abs" style="left:55px;top:56px" width="32" height="32" viewBox="0 0 32 32"><defs><linearGradient id="gshirt" x1="0" y1="0" x2="1" y2="0"><stop offset="0" stop-color="#2b7cc0"/><stop offset=".45" stop-color="#4f6fbc"/><stop offset="1" stop-color="#93399b"/></linearGradient><linearGradient id="gtie" x1="0" y1="0" x2="1" y2="0"><stop offset="0" stop-color="#c7e03a"/><stop offset=".5" stop-color="#a9cb2a"/><stop offset="1" stop-color="#7fa81c"/></linearGradient></defs><rect x="1.500" y="2.500" width="27.500" height="27.500" rx="3" fill="url(#gshirt)" stroke="#24508a" stroke-width="1"/><path d="M2 26.500h26.500v1.500q0 1.500-1.500 1.500h-23.500q-1.500 0-1.500-1.500z" fill="#173f72" opacity=".65"/><path d="M8 2.300q7.200-1.800 14.400 0l-1.300 7-4 3h-3.800l-4-3z" fill="#52b3e4" stroke="#1f5f98" stroke-width=".8"/><path d="M10.500 4h9.400q.9 0 .6 1l-.9 3q-.3 1-1.500 1h-5.800q-1.200 0-1.500-1l-.9-3q-.3-1 .6-1z" fill="#0e5a92"/><path d="M13.600 10.300h3.200l.9 2.700 2.200 13-4.700 5-4.700-5 2.200-13z" fill="url(#gtie)" stroke="#5f8414" stroke-width=".8"/><path d="M13.600 10.300h3.200l.9 2.700h-5z" fill="#8db422"/></svg><div class="abs" style="left:42px;top:92px;width:57px;height:15px;background:#dbe9f5;border:1px solid #a9cbe8;border-radius:2px;box-sizing:border-box;"></div><div class="c" style="left:9px;width:124px;top:92px;">Aspetto</div><svg class="abs" style="left:179px;top:56px;color:#fff" width="32" height="32" viewBox="0 0 32 32"><rect x="1" y="1" width="30" height="30" rx="4.200" fill="url(#gbox)"/><use href="#g-pref3" x="7.5" y="7.5" width="17" height="17" fill="#fff"/></svg><div class="c" style="left:133px;width:124px;top:92px;">Associazioni file</div><svg class="abs" style="left:303px;top:56px" width="32" height="32" viewBox="0 0 32 32"><defs><linearGradient id="gbr" x1="0" y1="0" x2="1" y2="0"><stop offset="0" stop-color="#0a0a0a"/><stop offset=".4" stop-color="#4a4a4a"/><stop offset="1" stop-color="#d8d8d8"/></linearGradient></defs><circle cx="16" cy="16" r="8.500" fill="url(#gbr)" stroke="#111" stroke-width="1"/><circle cx="16.0" cy="3.8" r="1.600" fill="#111"/><circle cx="24.6" cy="7.4" r="1.600" fill="#111"/><circle cx="28.2" cy="16.0" r="1.600" fill="#111"/><circle cx="24.6" cy="24.6" r="1.600" fill="#333"/><circle cx="16.0" cy="28.2" r="1.600" fill="#777"/><circle cx="7.4" cy="24.6" r="1.600" fill="#aaa"/><circle cx="3.8" cy="16.0" r="1.500" fill="#fff" stroke="#bbb" stroke-width=".6"/><circle cx="7.4" cy="7.4" r="1.500" fill="#fff" stroke="#bbb" stroke-width=".6"/></svg><div class="c" style="left:257px;width:124px;top:92px;">Brightness<br>Settings</div><svg class="abs" style="left:427px;top:56px" width="32" height="32" viewBox="0 0 32 32"><defs><linearGradient id="gshirt" x1="0" y1="0" x2="1" y2="0"><stop offset="0" stop-color="#2b7cc0"/><stop offset=".45" stop-color="#4f6fbc"/><stop offset="1" stop-color="#93399b"/></linearGradient><linearGradient id="gtie" x1="0" y1="0" x2="1" y2="0"><stop offset="0" stop-color="#c7e03a"/><stop offset=".5" stop-color="#a9cb2a"/><stop offset="1" stop-color="#7fa81c"/></linearGradient></defs><rect x="1.500" y="2.500" width="27.500" height="27.500" rx="3" fill="url(#gshirt)" stroke="#24508a" stroke-width="1"/><path d="M2 26.500h26.500v1.500q0 1.500-1.500 1.500h-23.500q-1.500 0-1.500-1.500z" fill="#173f72" opacity=".65"/><path d="M8 2.300q7.200-1.800 14.400 0l-1.300 7-4 3h-3.800l-4-3z" fill="#52b3e4" stroke="#1f5f98" stroke-width=".8"/><path d="M10.500 4h9.400q.9 0 .6 1l-.9 3q-.3 1-1.500 1h-5.800q-1.200 0-1.500-1l-.9-3q-.3-1 .6-1z" fill="#0e5a92"/><path d="M13.600 10.300h3.200l.9 2.700 2.200 13-4.700 5-4.700-5 2.200-13z" fill="url(#gtie)" stroke="#5f8414" stroke-width=".8"/><path d="M13.600 10.300h3.200l.9 2.700h-5z" fill="#8db422"/></svg><div class="c" style="left:381px;width:124px;top:92px;">Configura<br>notifiche</div><svg class="abs" style="left:551px;top:56px" width="32" height="32" viewBox="0 0 32 32"><defs><linearGradient id="gbat" x1="0" y1="0" x2="1" y2="0"><stop offset="0" stop-color="#1769c2"/><stop offset=".35" stop-color="#4aa0f0"/><stop offset="1" stop-color="#0f56ab"/></linearGradient><linearGradient id="gbatt" x1="0" y1="0" x2="1" y2="0"><stop offset="0" stop-color="#9a9a9a"/><stop offset=".4" stop-color="#f2f2f2"/><stop offset="1" stop-color="#8a8a8a"/></linearGradient></defs><rect x="11.500" y="1.500" width="9" height="3" rx="1" fill="#cfcfcf" stroke="#555" stroke-width=".8"/><rect x="5.500" y="3.500" width="21" height="26.500" rx="2.500" fill="url(#gbat)" stroke="#1d3e6e" stroke-width="1"/><path d="M6 12V6q0-2 2-2h16q2 0 2 2v6z" fill="url(#gbatt)"/><path d="M16 6v5M13.500 8.500h5" stroke="#222" stroke-width="1.500"/><path d="M13 26h6" stroke="#fff" stroke-width="1.800"/></svg><div class="c" style="left:505px;width:124px;top:92px;">Gestore energia</div><svg class="abs" style="left:55px;top:148px;color:#fff" width="32" height="32" viewBox="0 0 32 32"><rect x="1" y="1" width="30" height="30" rx="4.200" fill="url(#gbox)"/><use href="#g-sys" x="5.25" y="5.25" width="21.5" height="21.5" fill="#fff"/></svg><div class="c" style="left:9px;width:124px;top:184px;">Impostazioni<br>della sessione</div><svg class="abs" style="left:179px;top:148px" width="32" height="32" viewBox="0 0 32 32"><defs><linearGradient id="gflag" x1="0" y1="0" x2="1" y2="0"><stop offset="0" stop-color="#3f84cf"/><stop offset=".25" stop-color="#6aa5e4"/><stop offset=".6" stop-color="#4a8dd6"/><stop offset="1" stop-color="#3a7cc8"/></linearGradient></defs><path d="M2 2.500v28" stroke="#444" stroke-width="1.600"/><circle cx="2" cy="2" r="1.300" fill="#bbb" stroke="#444" stroke-width=".6"/><rect x="3" y="3.500" width="27.500" height="23" rx="2" fill="url(#gflag)" stroke="#2a5f9d" stroke-width=".9"/><circle cx="17" cy="15" r="7.600" fill="none" stroke="#e4eefa" stroke-width="1.300" stroke-dasharray="1.600 .7"/><circle cx="17" cy="14.500" r="5" fill="#eef4fb" opacity=".92"/><path d="M14 12.500l2.500 1 1-1.500 2 1.500-1 2 1.500 1.500-2 1-1.500-1.500-2 .5z" fill="#5a98dc"/></svg><div class="c" style="left:133px;width:124px;top:184px;">Lingua e Paese</div><svg class="abs" style="left:303px;top:148px" width="32" height="32" viewBox="0 0 32 32"><rect x="2.500" y="2" width="27" height="25.500" rx="3" fill="#1c1c1c" stroke="#000" stroke-width=".8"/><rect x="4" y="3.500" width="24" height="17" rx="1.500" fill="url(#gscreen)"/><path d="M3 21.500h26v3.500q0 2-2 2h-22q-2 0-2-2z" fill="#e3e3e3"/><path d="M3 21.500h26" stroke="#fff" stroke-width=".8"/><path d="M23.500 23.500h3l-1.500 1.800z" fill="#1fb4e0"/><path d="M8 28h16l1 2.300h-18z" fill="#c9c9c9" stroke="#8e8e8e" stroke-width=".6"/></svg><div class="c" style="left:257px;width:124px;top:184px;">Monitor</div><svg class="abs" style="left:427px;top:148px" width="32" height="32" viewBox="0 0 32 32"><defs><linearGradient id="gkey2" x1="0" y1="0" x2="1" y2="1"><stop offset="0" stop-color="#d4d4d4"/><stop offset="1" stop-color="#f4f4f4"/></linearGradient></defs><rect x="1.500" y="2.500" width="27.500" height="27" rx="2.500" fill="#e9e9e9" stroke="#858585" stroke-width="1"/><path d="M2 26h26.500v1.500q0 1.500-1.500 1.500h-23.500q-1.500 0-1.500-1.500z" fill="#a4a4a4"/><rect x="4.500" y="4.500" width="21.500" height="20.500" rx="1.500" fill="url(#gkey2)" stroke="#fafafa" stroke-width=".8"/><text x="17.500" y="21.500" text-anchor="middle" font-family="DejaVu Sans,sans-serif" font-weight="bold" font-size="16.500" fill="#4d6a82">â</text></svg><div class="c" style="left:381px;width:124px;top:184px;">Scorciatoie<br>globali</div><svg class="abs" style="left:551px;top:148px" width="32" height="32" viewBox="0 0 32 32"><path d="M3 6q0-2 2-2h8q1.500 0 2 1.500l.5 1.500h-12.500z" fill="#f2f2f0" stroke="#a6a6a3" stroke-width=".9"/><path d="M2.500 7.500h3.500v20h-2q-1.500 0-1.500-1.500z" fill="#e9e9e7" stroke="#a6a6a3" stroke-width=".8"/><rect x="5" y="7.500" width="25.500" height="20.500" rx="2.500" fill="url(#gfold)" stroke="#2f6596" stroke-width="1"/><rect x="9" y="11.500" width="17.500" height="13" rx="1.500" fill="#2b5f92"/><path d="M12 15h4M12 21.500h11.500" stroke="#b7d6f0" stroke-width="1.400"/></svg><div class="c" style="left:505px;width:124px;top:184px;">Scrivania</div><svg class="abs" style="left:55px;top:240px" width="32" height="32" viewBox="0 0 32 32"><defs><linearGradient id="gkey2" x1="0" y1="0" x2="1" y2="1"><stop offset="0" stop-color="#d4d4d4"/><stop offset="1" stop-color="#f4f4f4"/></linearGradient></defs><rect x="1.500" y="2.500" width="27.500" height="27" rx="2.500" fill="#e9e9e9" stroke="#858585" stroke-width="1"/><path d="M2 26h26.500v1.500q0 1.500-1.500 1.500h-23.500q-1.500 0-1.500-1.500z" fill="#a4a4a4"/><rect x="4.500" y="4.500" width="21.500" height="20.500" rx="1.500" fill="url(#gkey2)" stroke="#fafafa" stroke-width=".8"/><text x="17.500" y="21.500" text-anchor="middle" font-family="DejaVu Sans,sans-serif" font-weight="bold" font-size="16.500" fill="#4d6a82">â</text></svg><div class="c" style="left:9px;width:124px;top:276px;">Tastiera e<br>mouse</div><svg class="abs" style="left:179px;top:240px;color:#fff" width="32" height="32" viewBox="0 0 32 32"><rect x="1" y="1" width="30" height="30" rx="4.200" fill="url(#gbox)"/><use href="#g-sys" x="5.25" y="5.25" width="21.5" height="21.5" fill="#fff"/></svg><div class="c" style="left:133px;width:124px;top:276px;">Window Effects</div><svg class="abs" style="left:55px;top:364px;color:#fff" width="32" height="32" viewBox="0 0 32 32"><rect x="1" y="1" width="30" height="30" rx="4.200" fill="url(#gbox)"/><use href="#g-sys" x="5.25" y="5.25" width="21.5" height="21.5" fill="#fff"/></svg><div class="c" style="left:9px;width:124px;top:400px;">Data e ora</div><svg class="abs" style="left:179px;top:364px" width="32" height="32" viewBox="0 0 32 32"><defs><linearGradient id="gprn" x1="0" y1="0" x2="0" y2="1"><stop offset="0" stop-color="#f4f4f4"/><stop offset=".45" stop-color="#bdbdbd"/><stop offset=".5" stop-color="#2a2a2a"/><stop offset=".75" stop-color="#555"/><stop offset="1" stop-color="#d8d8d8"/></linearGradient></defs><rect x="2.500" y="7" width="27" height="23" rx="3" fill="url(#gprn)" stroke="#6c6c6c" stroke-width="1"/><rect x="5" y="16" width="22" height="7" fill="#1c1c1c"/><rect x="7" y="2.500" width="18" height="13.500" fill="#fdfdfd" stroke="#8c8c8c" stroke-width=".8"/><rect x="8.500" y="4.500" width="7.500" height="6" fill="#f4b73c"/><path d="M8.500 9.500l3-2 4.500 3h-7.500z" fill="#c0632a"/><rect x="8.500" y="4.500" width="7.500" height="2" fill="#5d9be0"/><path d="M17.500 5h6M17.500 7.500h6M17.500 10h6M9 13h14.500" stroke="#9a9a9a" stroke-width="1"/><path d="M23 25.500h3l-1.500 1.800z" fill="#1fb4e0"/></svg><div class="c" style="left:133px;width:124px;top:400px;">Printers</div><svg class="abs" style="left:303px;top:364px" width="32" height="32" viewBox="0 0 32 32"><defs><linearGradient id="gbx" x1="0" y1="0" x2="0" y2="1"><stop offset="0" stop-color="#d9a24f"/><stop offset="1" stop-color="#b97f2f"/></linearGradient></defs><rect x="2.500" y="2.500" width="27" height="27.500" rx="3" fill="url(#gbx)" stroke="#8a5a1c" stroke-width="1"/><path d="M3 9h6q1 0 1 1v2.500q0 1-1 1H3z" fill="#f3e6cf"/><path d="M10.500 3h11v19l-5.500-4-5.500 4z" fill="#f57a1e" stroke="#c85a0c" stroke-width=".8"/><path d="M16 5l4 4h-2v4h-4V9h-2z" fill="#fff"/><rect x="15" y="9.500" width="2" height="2.500" fill="#f57a1e"/><path d="M5 27h10M7.500 22.500l-2.500 3h5zM12.500 22.500l-2.500 3h5zM7.500 25v2M12.500 25v2" stroke="#7a4e14" stroke-width="1" fill="#7a4e14"/><rect x="17.500" y="22.500" width="10" height="5" fill="#fff"/><path d="M19.200 23.300v3.400M21.200 23.300v3.400M23.200 23.300v3.400M25.400 23.300v3.400" stroke="#111" stroke-width="1.200"/></svg><div class="c" style="left:257px;width:124px;top:400px;">Software<br>Updater</div><svg class="abs" style="left:427px;top:364px" width="32" height="32" viewBox="0 0 32 32"><defs><linearGradient id="gdsk" x1="0" y1="0" x2="0" y2="1"><stop offset="0" stop-color="#ececec"/><stop offset="1" stop-color="#bfbfbf"/></linearGradient><linearGradient id="garr" x1="0" y1="0" x2="0" y2="1"><stop offset="0" stop-color="#52c3f5"/><stop offset="1" stop-color="#1382c9"/></linearGradient></defs><rect x="2.500" y="5" width="27" height="25" rx="3" fill="url(#gdsk)" stroke="#8f8f8f" stroke-width="1"/><path d="M3 25h26v2.500q0 2-2 2h-22q-2 0-2-2z" fill="#a9a9a9"/><circle cx="16" cy="15.500" r="9" fill="#dadada" stroke="#c2c2c2"/><circle cx="16" cy="15.500" r="4" fill="#c9c9c9"/><path d="M12.500 1.500h7v8.500h4L16 18.500 8.500 10h4z" fill="url(#garr)" stroke="#0f6cab" stroke-width=".9"/><circle cx="25.500" cy="27.300" r=".9" fill="#1fb4e0"/><circle cx="6.500" cy="22.500" r=".8" fill="#999"/></svg><div class="c" style="left:381px;width:124px;top:400px;">Startup Disk<br>Creator</div><svg class="abs" style="left:551px;top:364px;color:#fff" width="32" height="32" viewBox="0 0 32 32"><rect x="1" y="1" width="30" height="30" rx="4.200" fill="url(#gbox)"/><use href="#g-sys" x="5.25" y="5.25" width="21.5" height="21.5" fill="#fff"/></svg><div class="c" style="left:505px;width:124px;top:400px;">Utenti e gruppi</div><div class="abs" style="left:625px;top:452px;width:80px;height:23px;border:1px solid #aeaba5;border-radius:3px;background:linear-gradient(#fefefe,#efedea);box-sizing:border-box;"></div><div class="c" style="left:625px;width:80px;top:456px;">Chiudi</div></div><div id="menu" class="abs" style="left:0;top:471px;width:242px;height:374px;background:#fff;border-top:1px solid #9d9a94;border-right:1px solid #9d9a94;box-sizing:border-box;"><svg class="abs" style="left:4px;top:3px;color:#4d4d4d" width="16" height="16"><use href="#g-acc" width="16" height="16" fill="#4d4d4d"/></svg><div class="t" style="left:26px;top:3px;">Accessori</div><svg class="abs" style="left:231px;top:6px" width="7" height="10"><path d="M1 .5l5 4.500-5 4.500z" fill="#3a3a3a"/></svg><svg class="abs" style="left:4px;top:26px;color:#4d4d4d" width="16" height="16"><use href="#g-univ" width="16" height="16" fill="#4d4d4d"/></svg><div class="t" style="left:26px;top:26px;">Accesso universale</div><svg class="abs" style="left:231px;top:29px" width="7" height="10"><path d="M1 .5l5 4.500-5 4.500z" fill="#3a3a3a"/></svg><svg class="abs" style="left:4px;top:49px;color:#4d4d4d" width="16" height="16"><use href="#g-q" width="16" height="16" fill="#4d4d4d"/></svg><div class="t" style="left:26px;top:49px;">Altro</div><svg class="abs" style="left:231px;top:52px" width="7" height="10"><path d="M1 .5l5 4.500-5 4.500z" fill="#3a3a3a"/></svg><svg class="abs" style="left:4px;top:72px;color:#4d4d4d" width="16" height="16"><use href="#g-av" width="16" height="16" fill="#4d4d4d"/></svg><div class="t" style="left:26px;top:72px;">Audio e video</div><svg class="abs" style="left:231px;top:75px" width="7" height="10"><path d="M1 .5l5 4.500-5 4.500z" fill="#3a3a3a"/></svg><svg class="abs" style="left:4px;top:95px;color:#4d4d4d" width="16" height="16"><use href="#g-game" width="16" height="16" fill="#4d4d4d"/></svg><div class="t" style="left:26px;top:95px;">Giochi</div><svg class="abs" style="left:231px;top:98px" width="7" height="10"><path d="M1 .5l5 4.500-5 4.500z" fill="#3a3a3a"/></svg><svg class="abs" style="left:4px;top:118px;color:#4d4d4d" width="16" height="16"><use href="#g-graf" width="16" height="16" fill="#4d4d4d"/></svg><div class="t" style="left:26px;top:118px;">Grafica</div><svg class="abs" style="left:231px;top:121px" width="7" height="10"><path d="M1 .5l5 4.500-5 4.500z" fill="#3a3a3a"/></svg><svg class="abs" style="left:4px;top:141px;color:#4d4d4d" width="16" height="16"><use href="#g-net" width="16" height="16" fill="#4d4d4d"/></svg><div class="t" style="left:26px;top:141px;">Internet</div><svg class="abs" style="left:231px;top:144px" width="7" height="10"><path d="M1 .5l5 4.500-5 4.500z" fill="#3a3a3a"/></svg><svg class="abs" style="left:4px;top:164px;color:#4d4d4d" width="16" height="16"><use href="#g-edu" width="16" height="16" fill="#4d4d4d"/></svg><div class="t" style="left:26px;top:164px;">Istruzione</div><svg class="abs" style="left:231px;top:167px" width="7" height="10"><path d="M1 .5l5 4.500-5 4.500z" fill="#3a3a3a"/></svg><svg class="abs" style="left:4px;top:187px;color:#4d4d4d" width="16" height="16"><use href="#g-dev" width="16" height="16" fill="#4d4d4d"/></svg><div class="t" style="left:26px;top:187px;">Programmazione</div><svg class="abs" style="left:231px;top:190px" width="7" height="10"><path d="M1 .5l5 4.500-5 4.500z" fill="#3a3a3a"/></svg><svg class="abs" style="left:4px;top:210px;color:#4d4d4d" width="16" height="16"><use href="#g-sys" width="16" height="16" fill="#4d4d4d"/></svg><div class="t" style="left:26px;top:210px;">Strumenti di sistema</div><svg class="abs" style="left:231px;top:213px" width="7" height="10"><path d="M1 .5l5 4.500-5 4.500z" fill="#3a3a3a"/></svg><svg class="abs" style="left:4px;top:233px;color:#4d4d4d" width="16" height="16"><use href="#g-off" width="16" height="16" fill="#4d4d4d"/></svg><div class="t" style="left:26px;top:233px;">Ufficio</div><svg class="abs" style="left:231px;top:236px" width="7" height="10"><path d="M1 .5l5 4.500-5 4.500z" fill="#3a3a3a"/></svg><div class="abs" style="left:4px;top:254px;width:233px;height:1px;background:#bdbdbd;"></div><svg class="abs" style="left:4px;top:258px;color:#4d4d4d" width="16" height="16"><use href="#g-pref" width="16" height="16" fill="#4d4d4d"/></svg><div class="t" style="left:26px;top:258px;">Preferenze</div><svg class="abs" style="left:231px;top:261px" width="7" height="10"><path d="M1 .5l5 4.500-5 4.500z" fill="#3a3a3a"/></svg><svg class="abs" style="left:4px;top:281px;color:#4d4d4d" width="16" height="16"><use href="#g-star" width="16" height="16" fill="#4d4d4d"/></svg><div class="t" style="left:26px;top:281px;">About LXQt</div><div class="abs" style="left:4px;top:302px;width:233px;height:1px;background:#bdbdbd;"></div><svg class="abs" style="left:4px;top:306px;color:#4d4d4d" width="16" height="16"><use href="#g-power" width="16" height="16" fill="#4d4d4d"/></svg><div class="t" style="left:26px;top:306px;">Esci</div><svg class="abs" style="left:231px;top:309px" width="7" height="10"><path d="M1 .5l5 4.500-5 4.500z" fill="#3a3a3a"/></svg><svg class="abs" style="left:4px;top:329px;color:#4d4d4d" width="16" height="16"><use href="#g-lock" width="16" height="16" fill="#4d4d4d"/></svg><div class="t" style="left:26px;top:329px;">Blocca schermo</div><div class="abs" style="left:4px;top:350px;width:233px;height:1px;background:#bdbdbd;"></div><div class="abs" style="left:0;top:351px;width:241px;height:23px;background:#fff;border:1px solid #3d85c6;border-bottom:2px solid #2f75b4;border-radius:2px;box-sizing:border-box;"></div><div class="t" style="left:3px;top:354px;color:#8a8a8a;">Cerca...</div></div><div id="panel" class="abs" style="left:0;top:845px;width:1286px;height:32px;box-shadow:inset 0 1px 0 #b4b4b4;background:linear-gradient(#f5f5f5 0,#ececec 25%,#dcdcdc 60%,#cacaca 88%,#bdbdbd 100%);"><svg class="abs" style="left:1px;top:4px" width="24" height="24" viewBox="0 0 24 24"><defs><linearGradient id="glx" x1="0" y1="0" x2="0" y2="1"><stop offset="0" stop-color="#78a9d3"/><stop offset=".5" stop-color="#4583b5"/><stop offset="1" stop-color="#235f95"/></linearGradient></defs><circle cx="11.800" cy="11.700" r="10.100" fill="url(#glx)" stroke="#2a4f74" stroke-width=".5"/><path d="M1.700 11.200L13.600 4.500 18.300 18.800 16.900 19.800 12 10.400 5.100 19.500 3.200 17.500 7.200 12.100 1.900 12.300z" fill="#fff"/><path d="M2 12.100l4.300-.8M3.100 17.300l4.500-5.800M4.800 19.300l4-5.800" stroke="#15324f" stroke-width=".7" fill="none"/></svg><div class="abs" style="left:29px;top:2px;width:22px;height:29px;border:1px solid #7fb0e0;border-radius:3px;background:linear-gradient(#f8f8f8,#e4e4e4);box-sizing:border-box;"></div><div class="c" style="left:29px;width:22px;top:9px;color:#444;">1</div><div class="abs" style="left:53px;top:2px;width:22px;height:29px;border:1px solid #b4b4b4;border-radius:3px;background:linear-gradient(#dcdcdc,#c4c4c4);box-sizing:border-box;"></div><div class="c" style="left:53px;width:22px;top:9px;color:#444;">2</div><svg class="abs" style="left:79px;top:7px" width="4" height="20"><circle cx="2" cy="2" r="1.800" fill="#c2c2c2" stroke="#b4b4b4" stroke-width=".4"/><circle cx="2" cy="7" r="1.800" fill="#c2c2c2" stroke="#b4b4b4" stroke-width=".4"/><circle cx="2" cy="12" r="1.800" fill="#c2c2c2" stroke="#b4b4b4" stroke-width=".4"/><circle cx="2" cy="17" r="1.800" fill="#c2c2c2" stroke="#b4b4b4" stroke-width=".4"/></svg><div class="c" style="left:81px;width:134px;top:2px;color:#6a6a6a;line-height:15px;">Rilascia qui le icone<br>delle applicazioni</div><svg class="abs" style="left:216px;top:7px" width="4" height="20"><circle cx="2" cy="2" r="1.800" fill="#c2c2c2" stroke="#b4b4b4" stroke-width=".4"/><circle cx="2" cy="7" r="1.800" fill="#c2c2c2" stroke="#b4b4b4" stroke-width=".4"/><circle cx="2" cy="12" r="1.800" fill="#c2c2c2" stroke="#b4b4b4" stroke-width=".4"/><circle cx="2" cy="17" r="1.800" fill="#c2c2c2" stroke="#b4b4b4" stroke-width=".4"/></svg><div class="abs" style="left:222px;top:5px;width:399px;height:23px;border:1px solid #7eaadb;border-radius:4px;background:linear-gradient(#fbfbfb,#ececec);box-sizing:border-box;"></div><svg class="abs" style="left:228px;top:7px" width="19" height="19" viewBox="0 0 19 19"><rect x=".5" y=".5" width="18" height="18" rx="2.200" fill="url(#gdark2)"/><use href="#g-sun" x="2.500" y="2.500" width="14" height="14" fill="#ececec"/><circle cx="9.500" cy="9.500" r="2.200" fill="#6a6a6a"/></svg><div class="t" style="left:252px;top:9px;">Centro di configurazione</div><svg class="abs" style="left:628px;top:6px" width="22" height="20" viewBox="0 0 22 20"><defs><linearGradient id="gtf" x1="0" y1="0" x2="0" y2="1"><stop offset="0" stop-color="#bdd5e9"/><stop offset=".55" stop-color="#559bd1"/><stop offset=".85" stop-color="#3a84c0"/><stop offset="1" stop-color="#2a679c"/></linearGradient></defs><path d="M1 3q0-1.800 1.500-1.800h1q.6 0 .9-.5.3-.5 1-.5h4.500q.7 0 1 .5.300.5 1 .5h6.500q1.500 0 1.500 1.500v16h-17.800q-1.100 0-1.100-1.200z" fill="#fcfcfc" stroke="#c6c6c6" stroke-width=".7"/><path d="M1.300 5v13.500q0 .8 1 .8h2" fill="none" stroke="#9d9d9d" stroke-width=".9" opacity=".7"/><rect x="2.900" y="3.300" width="18.300" height="16" rx="1.200" fill="url(#gtf)"/></svg><div class="t" style="left:654px;top:9px;">Applicazioni</div><svg class="abs" style="left:1136px;top:7px" width="4" height="20"><circle cx="2" cy="2" r="1.800" fill="#c2c2c2" stroke="#b4b4b4" stroke-width=".4"/><circle cx="2" cy="7" r="1.800" fill="#c2c2c2" stroke="#b4b4b4" stroke-width=".4"/><circle cx="2" cy="12" r="1.800" fill="#c2c2c2" stroke="#b4b4b4" stroke-width=".4"/><circle cx="2" cy="17" r="1.800" fill="#c2c2c2" stroke="#b4b4b4" stroke-width=".4"/></svg><svg class="abs" style="left:1150px;top:7px" width="4" height="20"><circle cx="2" cy="2" r="1.800" fill="#c2c2c2" stroke="#b4b4b4" stroke-width=".4"/><circle cx="2" cy="7" r="1.800" fill="#c2c2c2" stroke="#b4b4b4" stroke-width=".4"/><circle cx="2" cy="12" r="1.800" fill="#c2c2c2" stroke="#b4b4b4" stroke-width=".4"/><circle cx="2" cy="17" r="1.800" fill="#c2c2c2" stroke="#b4b4b4" stroke-width=".4"/></svg><svg class="abs" style="left:1157px;top:5px" width="24" height="24" viewBox="0 0 24 24"><rect x="2.500" y="2.500" width="19" height="18.500" rx="3" fill="none" stroke="#5c5c5c" stroke-width="3"/><rect x="16" y="19.500" width="3" height="1.200" fill="#bbb"/><circle cx="6.500" cy="6.500" r=".7" fill="#5a5a5a"/><circle cx="17.500" cy="6.500" r=".7" fill="#5a5a5a"/><circle cx="6.500" cy="16.500" r=".7" fill="#5a5a5a"/><circle cx="17.500" cy="16.500" r=".7" fill="#5a5a5a"/></svg><svg class="abs" style="left:1186px;top:8px" width="24" height="18" viewBox="0 0 24 18"><path d="M2 6.500h3.500L10 2.500v13L5.500 11.500H2z" fill="#555"/><path d="M12.500 6q1.500 3 0 6" fill="none" stroke="#555" stroke-width="1.300"/><path d="M15.500 4q2.500 5 0 10" fill="none" stroke="#888" stroke-width="1.300"/><path d="M18.500 2q3.500 7 0 14" fill="none" stroke="#aaa" stroke-width="1.300"/></svg><div class="t" style="left:1216px;top:9px;color:#555;">16:11</div><svg class="abs" style="left:1260px;top:3px" width="26" height="27" viewBox="0 0 26 27"><path d="M1 5q0-2 2-2h1q.7 0 1-1.200.3-1.200 1.300-1.200h7q1 0 1.300 1.200.3 1.200 1.200 1.200h9.500v21h-23.300q-1 0-1-1.200z" fill="#fbfbfb" stroke="#b4b4b4" stroke-width=".8"/><rect x="4" y="5" width="24" height="19.500" rx="2.500" fill="url(#gfold)" stroke="#38699a" stroke-width="1"/><path d="M5.500 6.800h20" stroke="#eaf3fb" stroke-width="1" opacity=".9"/><rect x="8" y="9" width="18" height="12" rx="1.500" fill="#2e6496"/><path d="M10.500 12.500h4M10.500 18h12" stroke="#b7d6f0" stroke-width="1.400"/></svg></div>
</body></html>
